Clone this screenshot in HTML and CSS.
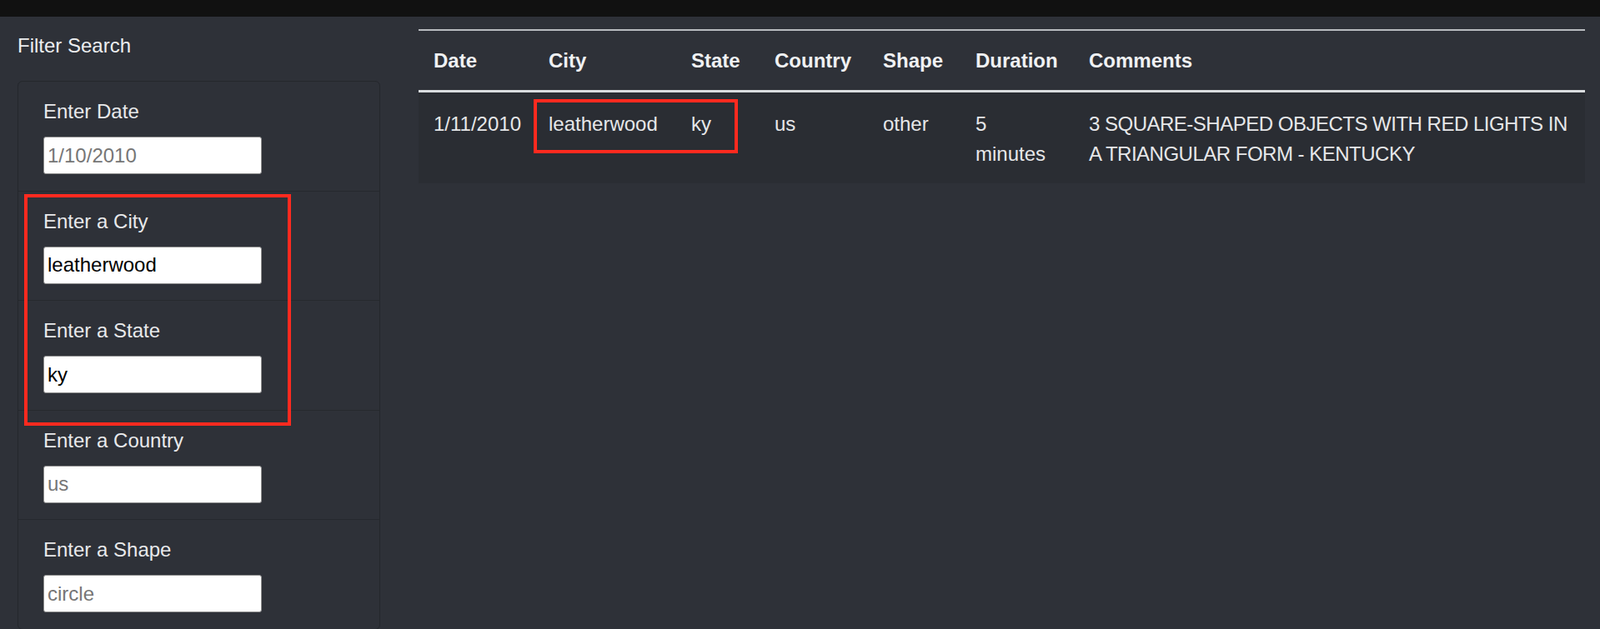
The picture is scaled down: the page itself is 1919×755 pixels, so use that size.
FILE: index.html
```html
<!DOCTYPE html>
<html lang="en">
<head>
<meta charset="utf-8">
<title>UFO Sightings</title>
<link rel="stylesheet" href="styles.css">
</head>
<body>
<div class="page">
  <div class="topbar"></div>
  <div class="main">
    <aside class="sidebar">
      <div class="title">Filter Search</div>
      <ul class="filters">
        <li class="filter-item">
          <label class="filter-label" for="date">Enter Date</label>
          <input class="filter-input" id="date" type="text" placeholder="1/10/2010">
        </li>
        <li class="filter-item">
          <label class="filter-label" for="city">Enter a City</label>
          <input class="filter-input" id="city" type="text" value="leatherwood">
        </li>
        <li class="filter-item">
          <label class="filter-label" for="state">Enter a State</label>
          <input class="filter-input" id="state" type="text" value="ky">
        </li>
        <li class="filter-item">
          <label class="filter-label" for="country">Enter a Country</label>
          <input class="filter-input" id="country" type="text" placeholder="us">
        </li>
        <li class="filter-item">
          <label class="filter-label" for="shape">Enter a Shape</label>
          <input class="filter-input" id="shape" type="text" placeholder="circle">
        </li>
      </ul>
    </aside>
    <section class="results">
      <table class="ufo-table">
        <colgroup>
          <col class="c-date">
          <col class="c-city">
          <col class="c-state">
          <col class="c-country">
          <col class="c-shape">
          <col class="c-duration">
          <col class="c-comments">
        </colgroup>
        <thead>
          <tr>
            <th>Date</th>
            <th>City</th>
            <th>State</th>
            <th>Country</th>
            <th>Shape</th>
            <th>Duration</th>
            <th>Comments</th>
          </tr>
        </thead>
        <tbody>
          <tr>
            <td class="nowrap">1/11/2010</td>
            <td class="nowrap">leatherwood</td>
            <td class="nowrap">ky</td>
            <td class="nowrap">us</td>
            <td class="nowrap">other</td>
            <td>5 minutes</td>
            <td class="comments">3 SQUARE-SHAPED OBJECTS WITH RED LIGHTS IN A TRIANGULAR FORM - KENTUCKY</td>
          </tr>
        </tbody>
      </table>
    </section>
  </div>
  <div class="highlight highlight-filters"></div>
  <div class="highlight highlight-row"></div>
</div>
</body>
</html>
```
FILE: styles.css
```css
html, body {
  margin: 0;
  padding: 0;
}

body {
  background: #2e3138;
  color: #e8e9eb;
  font-family: "Liberation Sans", Arial, sans-serif;
  font-size: 24px;
  line-height: 36px;
  overflow: hidden;
}

.page {
  position: relative;
  min-height: 755px;
}

.topbar {
  height: 20px;
  background: #111111;
}

.main {
  display: flex;
  align-items: flex-start;
}

.sidebar {
  width: 435px;
  padding: 0 24px 0 21px;
  flex: none;
}

.title {
  margin-top: 17px;
  color: #eceef0;
}

.filters {
  list-style: none;
  margin: 24px 0 0 0;
  padding: 0;
  border: 1px solid #24272c;
  border-radius: 6px;
  background: #2e3138;
}

.filter-item {
  padding: 18px 30px 19.5px 30px;
  border-top: 1px solid #26292e;
}

.filter-item:first-child {
  border-top: none;
}

.filter-label {
  display: block;
  margin-bottom: 12px;
  color: #e8e9eb;
}

.filter-input {
  box-sizing: border-box;
  display: block;
  width: 262px;
  height: 45px;
  margin: 0;
  padding: 0 4px;
  border: 1.5px solid #8c8c8c;
  border-radius: 3px;
  background: #ffffff;
  color: #000000;
  font-family: "Liberation Sans", Arial, sans-serif;
  font-size: 24px;
  outline: none;
}

.filter-input::placeholder {
  color: #767676;
}

.results {
  flex: 1;
  padding: 15px 18px 0 22px;
}

.ufo-table {
  width: 1399px;
  border-collapse: collapse;
  table-layout: fixed;
  border-top: 2px solid #b8bbbf;
}

.c-date { width: 138px; }
.c-city { width: 171px; }
.c-state { width: 100px; }
.c-country { width: 130px; }
.c-shape { width: 111px; }
.c-duration { width: 136px; }
.c-comments { width: auto; }

.ufo-table th {
  padding: 18px 18px 17px 18px;
  text-align: left;
  font-weight: bold;
  color: #f0f1f3;
  border-bottom: 3px solid #d9dcdf;
  white-space: nowrap;
}

.ufo-table td {
  padding: 20px 18px 17px 18px;
  vertical-align: top;
  text-align: left;
  color: #e6e7e9;
  background: #2a2d33;
}

.nowrap {
  white-space: nowrap;
}

.comments {
  letter-spacing: -0.5px;
}

.highlight {
  position: absolute;
  box-sizing: border-box;
  border: 4px solid #ff2a1f;
  pointer-events: none;
}

.highlight-filters {
  left: 29px;
  top: 233px;
  width: 320px;
  height: 278px;
}

.highlight-row {
  left: 640px;
  top: 119px;
  width: 245px;
  height: 65px;
}
```
